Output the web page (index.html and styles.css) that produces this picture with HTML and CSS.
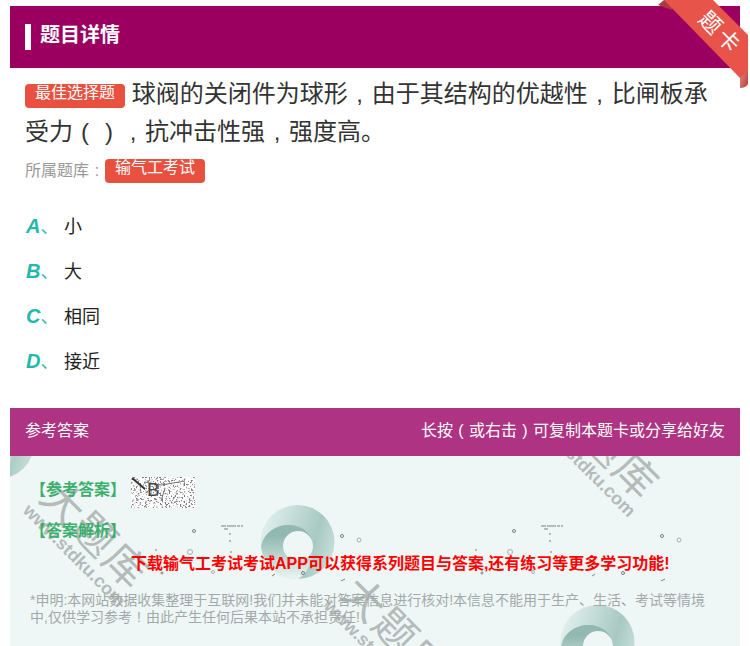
FILE: index.html
```html
<!DOCTYPE html>
<html lang="zh-CN">
<head>
<meta charset="utf-8">
<title>题目详情</title>
<link rel="stylesheet" href="styles.css">
</head>
<body>
<main class="page">
  <header class="head"><i class="head-bar"></i><h1 class="head-title">题目详情</h1></header>
  <svg class="ribbon" width="92" height="90" viewBox="658 0 92 90" aria-hidden="true">
    <defs>
      <linearGradient id="foldA" x1="0" y1="0" x2="1" y2="1"><stop offset="0" stop-color="#e9a09a"/><stop offset="1" stop-color="#b93a30"/></linearGradient>
    </defs>
    <path d="M658 5 L664 0 L672 0 L672 10 Z" fill="#a83a42"/>
    <path d="M740 60 L748 68 L748 84 Q746 88 740 88 Z" fill="url(#foldA)"/>
    <path d="M664 0 L713 0 L748 35 L748 72 L740 78 Z" fill="#e8534a"/>
    <text class="ribbon-text" transform="translate(710 23) rotate(45)" text-anchor="middle" y="7">题</text>
    <text class="ribbon-text" transform="translate(728 41) rotate(45)" text-anchor="middle" y="7">卡</text>
  </svg>

  <section class="question">
    <p class="stem"><span class="tag tag-type">最佳选择题</span> 球阀的关闭件为球形<span class="punct">,</span>由于其结构的优越性<span class="punct">,</span>比闸板承受力<span class="punct">(</span><span class="punct">)</span><span class="punct">,</span>抗冲击性强<span class="punct">,</span>强度高。</p>
    <p class="meta"><span class="meta-label">所属题库<span class="punct">:</span></span><span class="tag">输气工考试</span></p>
    <ul class="options">
      <li class="option"><span class="opt-key"><b>A</b>、</span><span>小</span></li>
      <li class="option"><span class="opt-key"><b>B</b>、</span><span>大</span></li>
      <li class="option"><span class="opt-key"><b>C</b>、</span><span>相同</span></li>
      <li class="option"><span class="opt-key"><b>D</b>、</span><span>接近</span></li>
    </ul>
  </section>

  <section class="answer">
    <div class="answer-head"><span>参考答案</span><span>长按<span class="punct">(</span>或右击<span class="punct">)</span>可复制本题卡或分享给好友</span></div>
    <div class="answer-body">
      <div class="bg-layer" aria-hidden="true">
        <svg class="ring ring-1" viewBox="0 0 75 75"><use href="#ringShape"/></svg>
        <svg class="ring ring-2" viewBox="0 0 75 75"><use href="#ringShape"/></svg>
        <svg class="ring ring-3" viewBox="0 0 75 75">
          <defs>
            <linearGradient id="ringBack" x1="0" y1="0.2" x2="1" y2="0.5"><stop offset="0" stop-color="#e4f2ef"/><stop offset="0.75" stop-color="#a8c9c3"/><stop offset="1" stop-color="#c4dcd7"/></linearGradient>
            <linearGradient id="ringFront" x1="0.5" y1="0.2" x2="0.5" y2="1"><stop offset="0" stop-color="#92b9b1"/><stop offset="1" stop-color="#eaf5f2"/></linearGradient>
            <g id="ringShape">
              <circle cx="37.5" cy="37" r="37" fill="url(#ringBack)"/>
              <path d="M1 42 C3 28 16 20 28 20 C42 20 52 28 53 41 C53 56 48 68 38 74 A37 37 0 0 1 1 42 Z" fill="url(#ringFront)"/>
              <circle cx="38" cy="41" r="15" fill="#eef7f6"/>
            </g>
          </defs>
          <use href="#ringShape"/>
        </svg>
        <div class="wm wm-1"><div class="wm-big">大题库</div><div class="wm-small">www.stdku.com</div></div>
        <div class="wm wm-2"><div class="wm-big">大题库</div><div class="wm-small">www.stdku.com</div></div>
        <div class="wm wm-3"><div class="wm-big">大题库</div><div class="wm-small">www.stdku.com</div></div>
        <svg class="drops" width="730" height="190" viewBox="10 456 730 190">
          <defs>
            <g id="dropSet" fill="none" stroke="#77817f" stroke-width="1">
              <circle cx="194" cy="531" r="1.5"/>
              <path d="M221 526 H243" stroke-dasharray="5 1 9 1 3 1"/>
              <path d="M224 529 H228 M230 533 V535"/>
              <circle cx="342" cy="536" r="1.5"/>
              <circle cx="359" cy="540" r="2" stroke="#a6b0ae"/>
              <circle cx="190" cy="552" r="2.5" stroke="#a6b0ae"/>
              <path d="M156 549 V551 M230 540 V542 M231 551 V553"/>
              <circle cx="162" cy="573" r="1"/>
              <circle cx="213" cy="572" r="1.5" stroke="#a6b0ae"/>
              <path d="M272 576 L275 574 M341 581 L345 579"/>
              <circle cx="303" cy="573" r="1.5"/>
            </g>
          </defs>
          <use href="#dropSet"/>
          <use href="#dropSet" x="320"/>
        </svg>
      </div>

      <div class="answer-row">
        <span class="answer-label answer-label-1">【参考答案】</span>
        <span class="answer-value">
          <svg class="noise" width="64" height="31" viewBox="0 0 64 31" aria-hidden="true">
            <defs>
              <filter id="speckle" x="0" y="0" width="100%" height="100%">
                <feTurbulence type="fractalNoise" baseFrequency="0.55" numOctaves="2" seed="7"/>
                <feColorMatrix type="matrix" values="0 0 0 0 0.2  0 0 0 0 0.2  0 0 0 0 0.2  5 5 0 0 -5.2"/>
              </filter>
            </defs>
            <rect width="64" height="31" fill="#fff"/>
            <rect width="64" height="31" filter="url(#speckle)"/>
            <path d="M1 1 L14 12" stroke="#333" stroke-width="2"/>
            <path d="M14 5 L30 8 L54 4 M34 11 L30 24 M38 26 L34 30" stroke="#777" fill="none"/>
          </svg>
          <b class="answer-letter">B</b>
        </span>
      </div>
      <div class="answer-label answer-label-2">【答案解析】</div>
      <p class="promo">下载输气工考试考试APP可以获得系列题目与答案,还有练习等更多学习功能!</p>
      <p class="notice">*申明:本网站数据收集整理于互联网!我们并未能对答案信息进行核对!本信息不能用于生产、生活、考试等情境中,仅供学习参考<span class="punct">!</span>由此产生任何后果本站不承担责任!</p>
    </div>
  </section>
</main>
</body>
</html>
```
FILE: styles.css
```css
* { box-sizing: border-box; }
html, body { margin: 0; height: 646px; overflow: hidden; background: #fff; }
body { font-family: "Liberation Sans", "Noto Sans CJK SC", sans-serif; color: #333; }
p, h1, ul { margin: 0; padding: 0; }

.page { position: relative; height: 646px; padding: 6px 10px 0; display: flex; flex-direction: column; }

.punct { display: inline-block; width: 1em; text-align: center; }

.head { height: 62px; background: #9b0061; display: flex; align-items: center; padding-left: 15px; gap: 9px; flex: none; }
.head-bar { width: 6px; height: 26px; background: #fff; }
.head-title { font-size: 20px; font-weight: 700; line-height: 26px; color: #fff; margin-top: -5px; }

.ribbon { position: absolute; top: 0; right: 0; }
.ribbon-text { font-size: 22px; fill: #fff; font-family: "Noto Sans CJK SC", sans-serif; }

.question { padding: 7px 15px 0; flex: none; }
.stem { font-size: 24px; line-height: 38px; color: #333; }
.tag { display: inline-block; width: 100px; height: 24px; border-radius: 4px; background: #e8503f; color: #fff; font-size: 16px; line-height: 18px; text-align: center; vertical-align: top; }
.tag-type { margin-top: 9px; }
.meta { display: flex; align-items: center; margin-top: 8px; height: 24px; font-size: 16px; color: #999; }
.meta-label { line-height: 24px; }

.options { list-style: none; margin-top: 19px; }
.option { height: 45px; display: flex; align-items: center; font-size: 18px; color: #222; }
.opt-key { width: 39px; flex: none; color: #26b8ac; font-size: 18px; padding-left: 1px; }
.opt-key b { font-size: 20px; font-style: italic; font-weight: 700; }

.answer { margin-top: 26px; flex: 1; display: flex; flex-direction: column; min-height: 0; }
.answer-head { height: 48px; flex: none; background: #ae3382; color: #fff; display: flex; justify-content: space-between; align-items: center; padding: 0 15px 6px; font-size: 16px; }
.answer-body { position: relative; flex: 1; background: #eef7f6; overflow: hidden; padding: 21px 20px 0; }

.bg-layer { position: absolute; inset: 0; }
.ring { position: absolute; width: 75px; height: 75px; }
.ring-1 { left: 250px; top: 49px; }
.ring-2 { left: 550px; top: 149px; }
.ring-3 { left: -50px; top: -51px; }
.drops { position: absolute; left: 0; top: 0; }

.wm { position: absolute; width: 140px; height: 64px; transform: rotate(45deg); color: #b4bbba; text-align: center; white-space: nowrap; }
.wm-1 { left: 10px; top: 52px; }
.wm-2 { left: 520px; top: -38px; }
.wm-3 { left: 311px; top: 148px; }
.wm-big { font-size: 42px; line-height: 44px; letter-spacing: 2px; font-family: "Noto Sans CJK SC", sans-serif; }
.wm-small { font-size: 18px; line-height: 20px; font-weight: 700; }

.answer-row { position: relative; display: flex; align-items: center; height: 31px; }
.answer-label { position: relative; font-size: 16px; font-weight: 700; color: #3daf6d; line-height: 24px; }
.answer-label-1 { margin-bottom: 6px; }
.answer-label-2 { margin-top: 11px; }
.answer-value { position: relative; display: block; width: 64px; height: 31px; margin-left: 5px; }
.noise { display: block; }
.answer-letter { position: absolute; left: 16px; top: 2px; font-size: 19px; font-weight: 400; color: #444; line-height: 22px; }

.promo { position: relative; margin: 9px 0 0 101px; font-size: 16px; font-weight: 700; line-height: 24px; color: #f00; white-space: nowrap; }
.notice { position: relative; margin-top: 16px; font-size: 14px; line-height: 17px; color: #a3a9a8; width: 680px; }
```
